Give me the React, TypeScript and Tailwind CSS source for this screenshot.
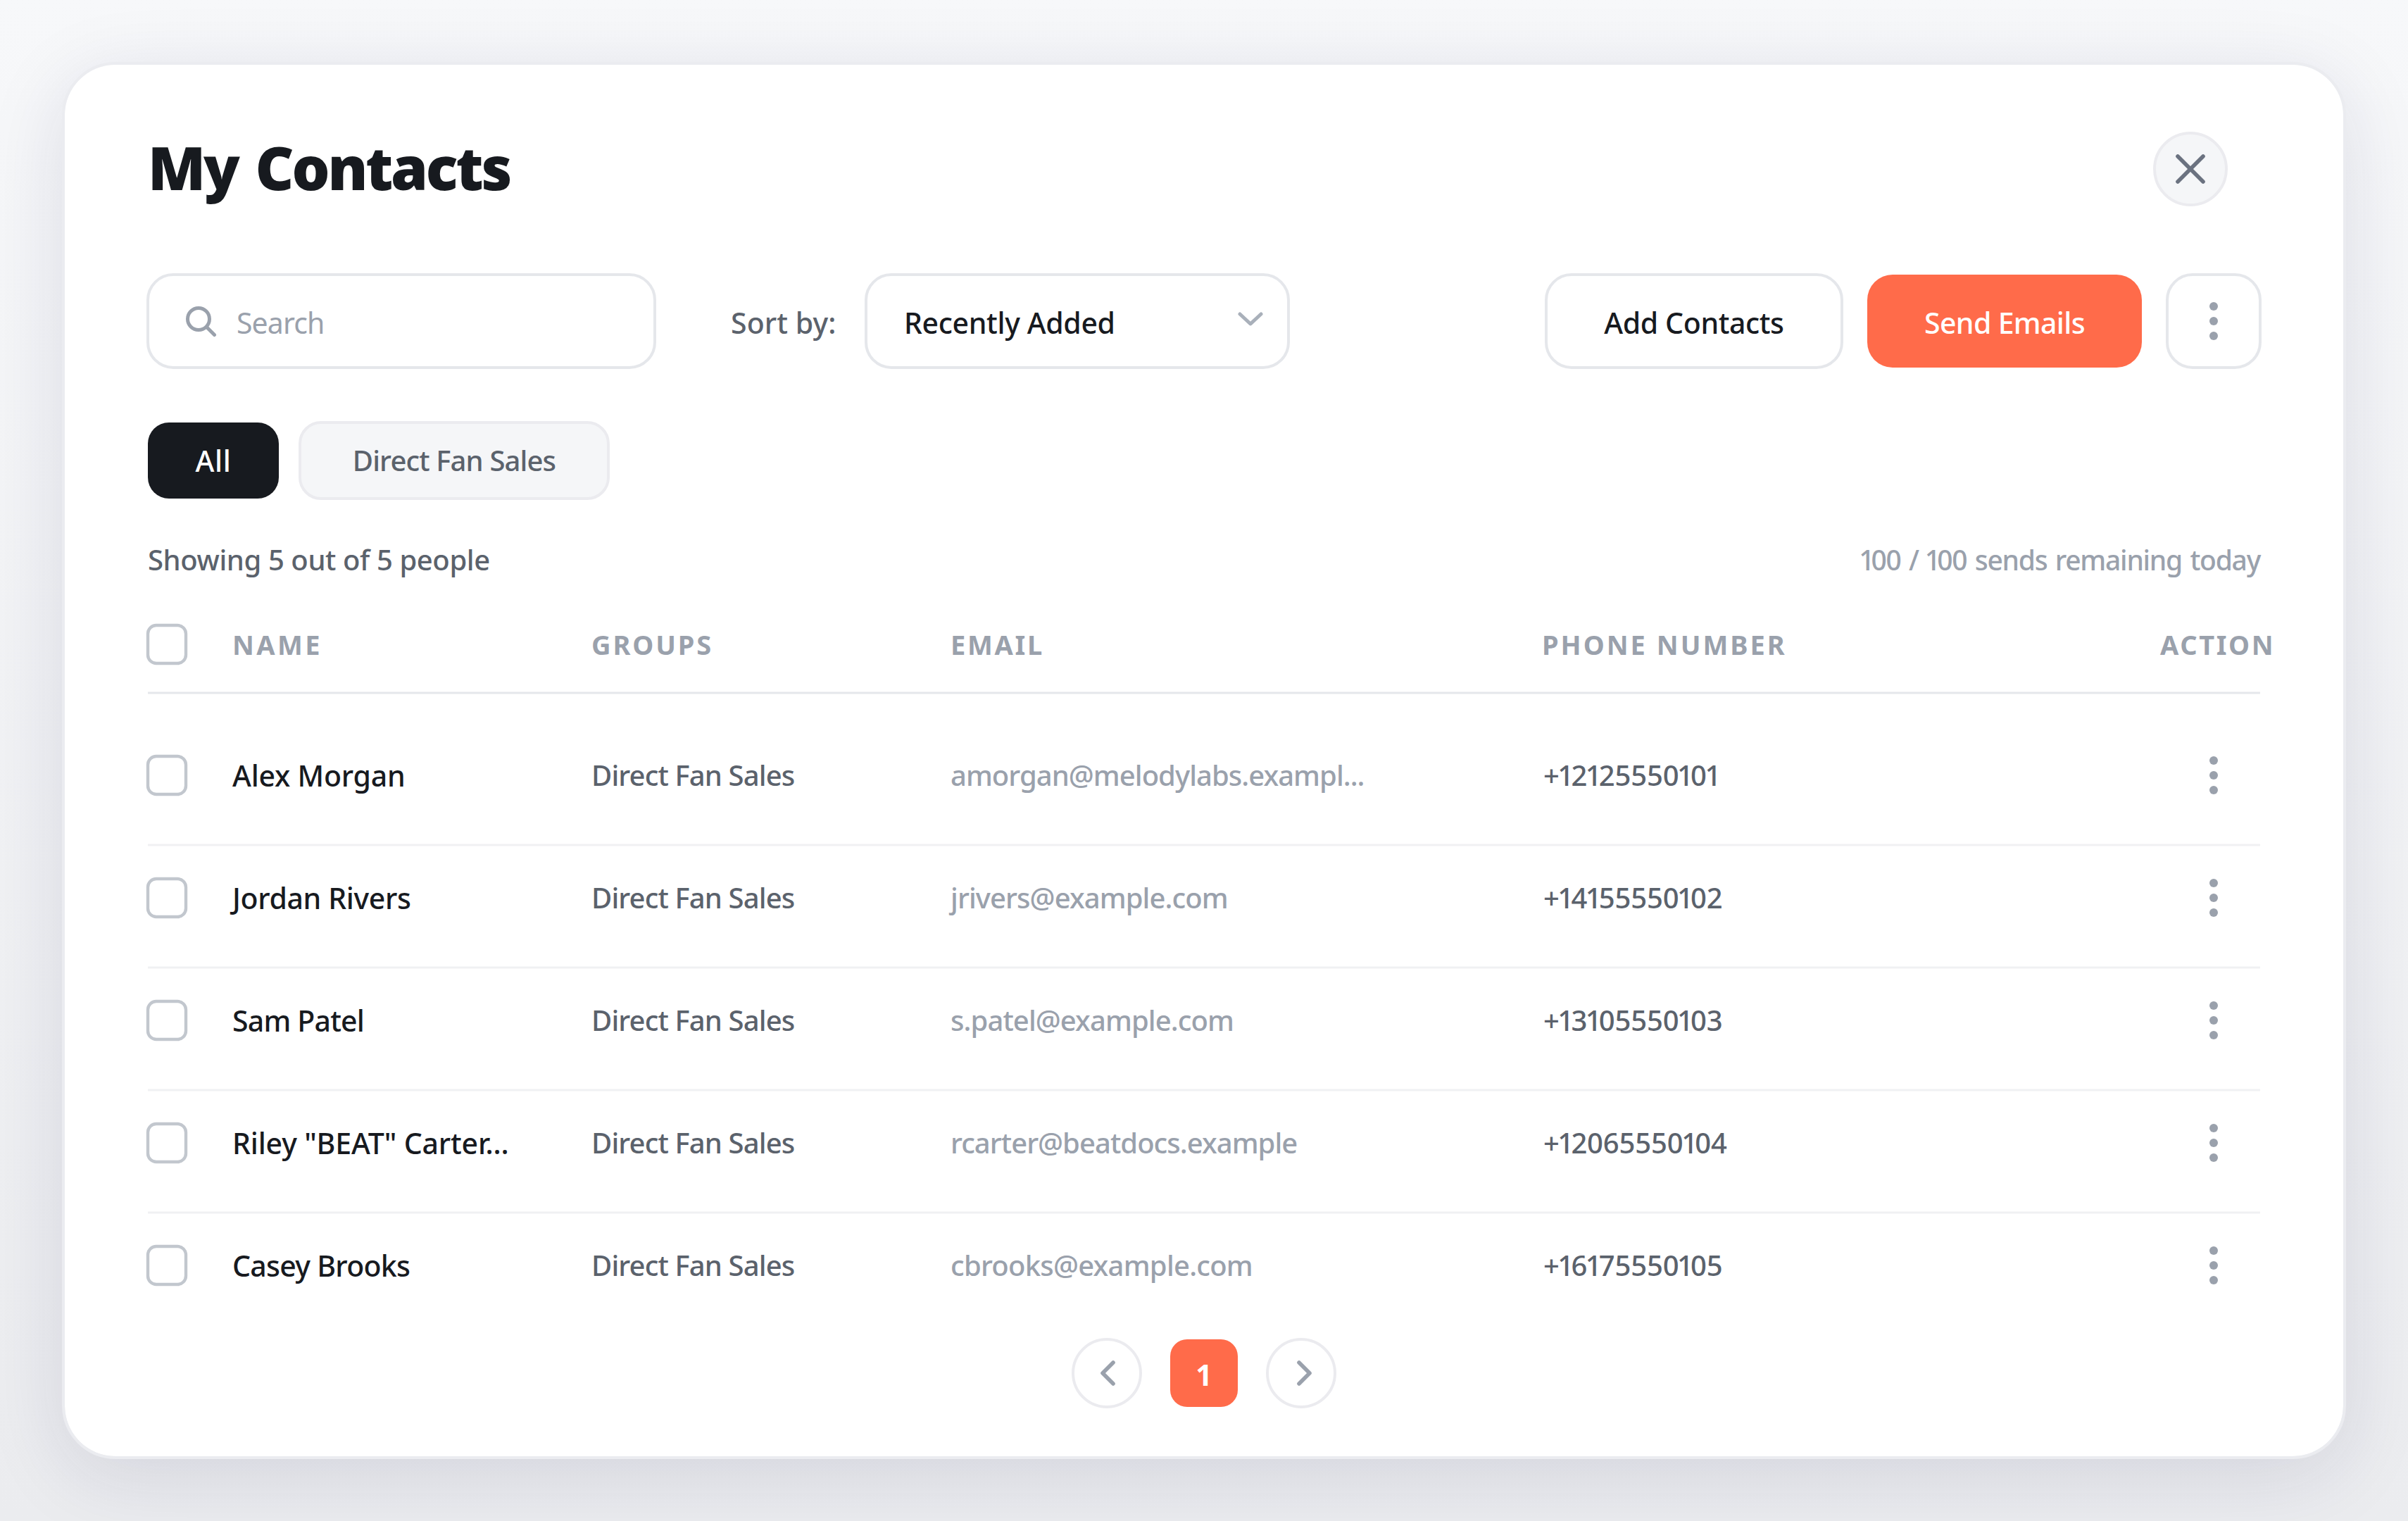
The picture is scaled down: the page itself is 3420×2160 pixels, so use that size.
import React from "react";

type Contact = { name: string; nameTracking: string; email: string; emailTracking: string; phone: string };

const contacts: Contact[] = [
  { name: "Alex Morgan", nameTracking: "tracking-[-0.2px]", email: "amorgan@melodylabs.exampl...", emailTracking: "tracking-[-0.95px]", phone: "+12125550101" },
  { name: "Jordan Rivers", nameTracking: "tracking-[-0.35px]", email: "jrivers@example.com", emailTracking: "tracking-[-0.9px]", phone: "+14155550102" },
  { name: "Sam Patel", nameTracking: "tracking-[-0.8px]", email: "s.patel@example.com", emailTracking: "tracking-[-0.9px]", phone: "+13105550103" },
  { name: 'Riley "BEAT" Carter...', nameTracking: "tracking-[-0.15px]", email: "rcarter@beatdocs.example", emailTracking: "tracking-[-0.95px]", phone: "+12065550104" },
  { name: "Casey Brooks", nameTracking: "tracking-[-0.7px]", email: "cbrooks@example.com", emailTracking: "tracking-[-0.75px]", phone: "+16175550105" },
];

const columns = "grid grid-cols-[120px_510px_510px_840px_878px_142px] items-center whitespace-nowrap";

/** Text whose figure one is set narrower than the other digits. */
function Figures({ text }: { text: string }) {
  return (
    <>
      {text.split(/(1)/).map((part, i) =>
        part === "1" ? (
          <span key={i} className="-mr-[3.7px] -ml-[2.4px]">1</span>
        ) : (
          part
        ),
      )}
    </>
  );
}

function Dots() {
  return (
    <svg className="block h-[54px] w-3 fill-[#9aa1ac]" viewBox="0 0 12 54">
      <circle cx="6" cy="6" r="6" />
      <circle cx="6" cy="27" r="6" />
      <circle cx="6" cy="48" r="6" />
    </svg>
  );
}

function Checkbox() {
  return (
    <svg className="-ml-[3px] block size-15 fill-white stroke-[#c2c7ce] stroke-[4.4px]" viewBox="0 0 60 60">
      <rect x="3" y="3" width="54" height="54" rx="12" />
    </svg>
  );
}

function Rule({ tone }: { tone: string }) {
  return <div className={`h-1 border-y ${tone}`} />;
}

export default function App() {
  return (
    <div className="h-[2160px] w-[3420px] bg-linear-to-b from-[#f7f8fa] to-[#ebecef] p-[88px] font-['Noto_Sans',sans-serif] font-medium text-[#171a1f]">
      <main className="h-[1984px] rounded-[76px] border-4 border-[#ebecf0] bg-white bg-clip-padding px-[118px] shadow-[0_24px_112px_rgba(24,24,76,0.115)]">
        <header className="mt-[95px] flex h-[106px] items-center justify-between">
          <h1 className="pb-[6px] text-[85px] leading-[100px] font-black tracking-[-3.2px] [word-spacing:6px]">My Contacts</h1>
          <button className="mr-[46px] flex size-[106px] items-center justify-center rounded-full border-4 border-[#ebebef] bg-[#f5f6f8]">
            <svg className="size-[42px] fill-none stroke-[#6b7280] stroke-[5.6px]" viewBox="0 0 42 42" strokeLinecap="round">
              <path d="M3 3 39 39M39 3 3 39" />
            </svg>
          </button>
        </header>

        <div className="-mx-[2px] mt-[95px] flex h-[136px] items-center text-[41px] leading-[60px] whitespace-nowrap">
          <div className="flex h-full w-[724px] items-center rounded-[38px] border-4 border-[#e5e7eb] pl-[50px]">
            <svg className="h-[46px] w-[46px] fill-none stroke-[#9aa1ac] stroke-[5px]" viewBox="0 0 46 46" strokeLinecap="round">
              <circle cx="20" cy="20" r="15.5" />
              <path d="M31.5 31.5 42.5 42.5" />
            </svg>
            <span className="ml-[28px] pt-1 font-normal tracking-[-0.9px] text-[#9aa1ac]">Search</span>
          </div>
          <span className="ml-[106px] w-[190px] pt-1 tracking-[0.1px] text-[#5b626c]">Sort by:</span>
          <div className="flex h-full w-[604px] items-center justify-between rounded-[38px] border-4 border-[#e5e7eb] pr-[31px] pl-[52px]">
            <span className="pt-1 tracking-[-0.35px]">Recently Added</span>
            <svg className="mb-[6px] h-[24px] w-[42px] fill-none stroke-[#a9b0ba] stroke-[5px]" viewBox="0 0 42 24" strokeLinecap="round" strokeLinejoin="round">
              <path d="M6 5 21 19 36 5" />
            </svg>
          </div>
          <button className="ml-auto h-full w-[424px] rounded-[38px] border-4 border-[#e5e7eb] pt-1 tracking-[-0.4px]">Add Contacts</button>
          <button className="ml-[34px] h-[132px] w-[390px] rounded-[36px] bg-[#ff6b4a] pt-1 tracking-[-0.65px] text-white">Send Emails</button>
          <button className="ml-[34px] flex h-full w-[136px] items-center justify-center rounded-[38px] border-4 border-[#e5e7eb]">
            <Dots />
          </button>
        </div>

        <div className="mt-[74px] flex h-[112px] items-center">
          <button className="h-[108px] w-[186px] rounded-[30px] bg-[#171a1f] text-[41px] leading-[60px] tracking-[0.6px] text-white">All</button>
          <button className="ml-[28px] h-full w-[442px] rounded-[32px] border-4 border-[#ebebef] bg-[#f5f6f8] text-[40px] leading-[60px] tracking-[-0.85px] text-[#5b626c]">Direct Fan Sales</button>
        </div>

        <div className="mt-[54px] flex h-[61px] items-center justify-between leading-[60px]">
          <span className="text-[40px] tracking-[-0.4px] text-[#5b626c]">Showing 5 out of 5 people</span>
          <span className="text-[39px] tracking-[-1.25px] text-[#9aa1ac] [word-spacing:2.5px]"><Figures text="100 / 100 sends remaining today" /></span>
        </div>

        <div className={`mt-[60px] h-[60px] text-[38px] leading-[60px] font-bold text-[#9aa1ac] ${columns}`}>
          <Checkbox />
          <span className="tracking-[3.4px]">NAME</span>
          <span className="tracking-[2.9px]">GROUPS</span>
          <span className="tracking-[2.7px]">EMAIL</span>
          <span className="tracking-[3px]">PHONE NUMBER</span>
          <span className="tracking-[2.6px]">ACTION</span>
        </div>
        <div className="mt-[37px] mb-[42px]">
          <Rule tone="border-[#f2f3f5] bg-[#e5e7eb]" />
        </div>

        {contacts.map((row, i) => (
          <div key={row.phone}>
            <div className={`h-[146px] text-[40px] leading-[60px] ${columns}`}>
              <Checkbox />
              <span className={`text-[41px] ${row.nameTracking}`}>{row.name}</span>
              <span className="tracking-[-0.85px] text-[#5b626c]">Direct Fan Sales</span>
              <span className={`text-[#9aa1ac] ${row.emailTracking}`}>{row.email}</span>
              <span className="pl-[2px] tracking-[-0.15px] text-[#5b626c]"><Figures text={row.phone} /></span>
              <span className="pl-[70px]"><Dots /></span>
            </div>
            {i < contacts.length - 1 && (
              <div className="mt-6">
                <Rule tone="border-[#f8f8f9] bg-[#f0f1f3]" />
              </div>
            )}
          </div>
        ))}

        <nav className="mt-[30px] flex h-[100px] items-center justify-center gap-10">
          <button className="flex size-[100px] items-center justify-center rounded-full border-4 border-[#ebebef]">
            <svg className="h-[42px] w-[30px] fill-none stroke-[#9aa1ac] stroke-[5.6px]" viewBox="0 0 30 42" strokeLinecap="round" strokeLinejoin="round">
              <path d="M24 6 9 21 24 36" />
            </svg>
          </button>
          <button className="size-[96px] rounded-[24px] bg-[#ff6b4a] pt-1 text-[41px] leading-[60px] font-bold text-white">1</button>
          <button className="flex size-[100px] items-center justify-center rounded-full border-4 border-[#ebebef]">
            <svg className="h-[42px] w-[30px] fill-none stroke-[#9aa1ac] stroke-[5.6px]" viewBox="0 0 30 42" strokeLinecap="round" strokeLinejoin="round">
              <path d="M12 6 27 21 12 36" />
            </svg>
          </button>
        </nav>
      </main>
    </div>
  );
}
